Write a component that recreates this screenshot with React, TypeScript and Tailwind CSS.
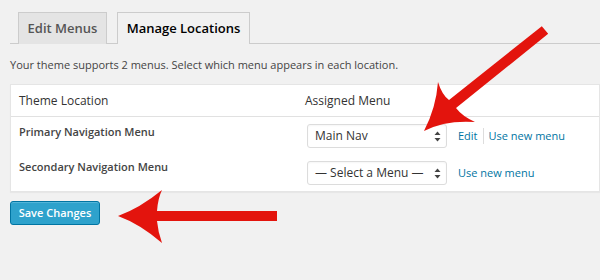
import React from "react";

function Select({ label }: { label: string }) {
  return (
    <div className="flex items-center justify-between h-[24px] w-[140px] rounded-[3px] border border-[#dcdcdc] bg-white pl-[7px] pr-[5px] shadow-[inset_0_1px_2px_rgba(0,0,0,0.04)]">
      <span className="text-[12px] text-[#333]">{label}</span>
      <svg width="7" height="11" viewBox="0 0 7 11">
        <path d="M3.5 0.5 L6.5 4 L0.5 4 Z" fill="#444" />
        <path d="M3.5 10.5 L6.5 7 L0.5 7 Z" fill="#444" />
      </svg>
    </div>
  );
}

export default function App() {
  return (
    <div
      className="relative w-[600px] h-[280px] overflow-hidden bg-[#f1f1f1]"
      style={{ fontFamily: '"Open Sans", "Noto Sans", sans-serif' }}
    >
      <div className="pt-[12px] pl-[10px]">
        {/* tabs */}
        <div className="flex items-end border-b border-[#ccc] pl-[8px] gap-[10px] h-[32px]">
          <div className="h-[32px] w-[89px] flex items-center justify-center bg-[#e4e4e4] border border-[#ccc] border-b-0 text-[13px] font-semibold text-[#555] -mb-px">
            Edit Menus
          </div>
          <div className="h-[32px] w-[133px] flex items-center justify-center bg-[#f1f1f1] border border-[#ccc] border-b-0 text-[13px] font-semibold text-[#000] -mb-px">
            Manage Locations
          </div>
        </div>
        <p className="mt-[13px] text-[11px] text-[#444] leading-[16px]">
          Your theme supports 2 menus. Select which menu appears in each location.
        </p>
        {/* table */}
        <div className="mt-[11px] bg-white border border-[#e5e5e5] shadow-[0_1px_1px_rgba(0,0,0,0.04)]">
          <div className="flex items-center h-[32px] border-b border-[#e1e1e1] text-[12px] text-[#333]">
            <div className="w-[294px] pl-[8px]">Theme Location</div>
            <div>Assigned Menu</div>
          </div>
          <div className="flex items-center h-[38px]">
            <div className="w-[296px] pl-[8px] mb-[8px] text-[11px] font-semibold text-[#444]">
              Primary Navigation Menu
            </div>
            <Select label="Main Nav" />
            <div className="flex items-center ml-[11px] text-[11px] text-[#0074a2]">
              <span>Edit</span>
              <span className="mx-[5px] h-[16px] w-px bg-[#ddd]" />
              <span>Use new menu</span>
            </div>
          </div>
          <div className="flex items-center h-[36px]">
            <div className="w-[296px] pl-[8px] mb-[12px] text-[11px] font-semibold text-[#444]">
              Secondary Navigation Menu
            </div>
            <Select label="— Select a Menu —" />
            <div className="ml-[11px] text-[11px] text-[#0074a2]">Use new menu</div>
          </div>
        </div>
        <button className="mt-[9px] h-[24px] w-[90px] rounded-[3px] bg-[#2ea2cc] border border-[#0074a2] text-white text-[11px] font-semibold shadow-[inset_0_1px_0_rgba(120,200,230,0.5)]">
          Save Changes
        </button>
      </div>
      {/* annotation arrows */}
      <svg className="absolute left-0 top-0" width="600" height="280" viewBox="0 0 600 280">
        <path
          d="M541.8 26.2 L548.2 33.8 L456 108 Q462 116 475 122 Q445 120 424 131 Q436 108 438 82 Q442 95 449 100 Z"
          fill="#e3140d"
        />
        <path
          d="M277 211 L157 211 Q158 198 162 190 Q140 208 118 216 Q140 224 162 243 Q158 232 157 221 L277 221 Z"
          fill="#e3140d"
        />
      </svg>
    </div>
  );
}
